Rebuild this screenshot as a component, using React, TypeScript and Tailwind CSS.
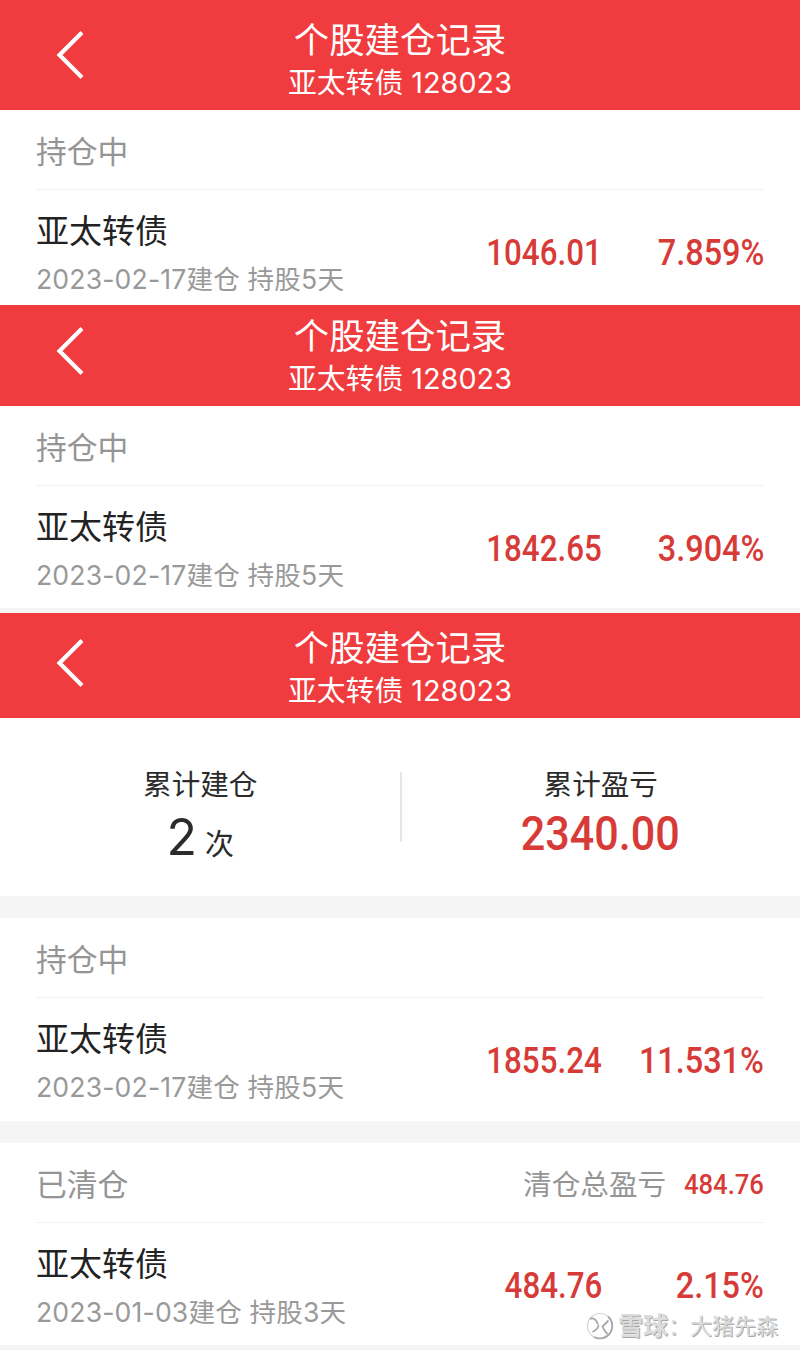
import React from "react";
import clsx from "clsx";

type Position = {
  name: string;
  detail: string;
  profit: string;
  percent: string;
};

interface HeaderProps {
  className: string;
}

const Header: React.FunctionComponent<HeaderProps> = ({className}) => {
  return (
    <header
      className={clsx("flex flex-none items-end justify-between bg-[#f03c3e] px-14 text-white", className)}
    >
      <svg className="mb-[30px] h-[50px] w-7" viewBox="0 0 28 50" fill="none">
        <path d="M26 2.5 3.5 25 26 47.5" stroke="currentColor" strokeWidth="4.2" />
      </svg>
      <div className="flex flex-col items-center whitespace-nowrap pb-[7px]">
        <h1 className="text-[35.4px] leading-[44px]">个股建仓记录</h1>
        <p className="text-[28.8px] leading-[40px]">亚太转债 128023</p>
      </div>
      <div className="w-7" />
    </header>
  );
};

interface AmountProps {
  children: React.ReactNode;
  className: string;
}

const Amount: React.FunctionComponent<AmountProps> = ({children, className}) => {
  return (
    <span
      className={clsx(
        "inline-block whitespace-nowrap font-['Roboto',sans-serif] font-medium text-[#d63b38]",
        className
      )}
    >
      {children}
    </span>
  );
};

interface PositionSectionProps {
  label: string;
  position: Position;
  total?: string;
  className: string;
}

const PositionSection: React.FunctionComponent<PositionSectionProps> = (props) => {
  const {label, position, total, className} = props;

  return (
    <section className={clsx("flex-none overflow-hidden bg-white px-9", className)}>
      <div className="flex h-20 items-center justify-between border-b border-[#f2f2f2] pt-1 text-[#959595]">
        <h2 className="text-[30.8px] leading-10">{label}</h2>
        {total && (
          <div className="flex items-center gap-[9px]">
            <span className="text-[28.6px] leading-10">清仓总盈亏</span>
            <Amount className="origin-right scale-x-[0.9] text-[28.5px] leading-10">{total}</Amount>
          </div>
        )}
      </div>
      <div className="flex h-[122px] items-center pt-1">
        <div className="flex-1 whitespace-nowrap pt-1">
          <h3 className="text-[33px] leading-[48px] text-[#222]">{position.name}</h3>
          <p className="text-[26.6px] leading-[48px] tracking-[0.15px] text-[#999]">{position.detail}</p>
        </div>
        <Amount className="origin-right scale-x-[0.87] text-[36px] leading-10">{position.profit}</Amount>
        <div className="w-[162px] text-right">
          <Amount className="origin-right scale-x-[0.9] text-[36px] leading-10">{position.percent}</Amount>
        </div>
      </div>
    </section>
  );
};

const Summary = () => {
  return (
    <section className="flex h-[178px] flex-none items-center bg-white text-[#2b2b2b]">
      <div className="flex h-full flex-1 flex-col items-center pl-px pt-[47px]">
        <span className="text-[28.6px] leading-10">累计建仓</span>
        <div className="flex h-16 items-baseline gap-2 leading-[64px]">
          <span className="text-[50px]">2</span>
          <span className="text-[29px]">次</span>
        </div>
      </div>
      <div className="h-[70px] w-0.5 bg-[#e6e6e6]" />
      <div className="flex h-full flex-1 flex-col items-center pt-[47px]">
        <span className="text-[28.6px] leading-10">累计盈亏</span>
        <Amount className="origin-center scale-x-[0.88] text-[49px] leading-[58px]">2340.00</Amount>
      </div>
    </section>
  );
};

const Watermark = () => {
  return (
    <div className="absolute bottom-1 right-[22px] flex items-center whitespace-nowrap text-[22px] leading-10 text-[#dcdcdc] [text-shadow:1px_1px_0_#a8a8a8]">
      <svg className="mr-1 h-7 w-7" viewBox="0 0 28 28" fill="none" stroke="#a8a8a8">
        <circle cx="14" cy="14" r="12.5" stroke="#d4d4d4" strokeWidth="1.2" />
        <path d="M22 4.500A12.500 12.500 0 0 1 8 25" strokeWidth="1.800" />
        <path d="M4 7c3.500-2 7 1.500 8 5.500M12.500 13c0 3-3 5.500-6 7" strokeWidth="1.8" />
        <path d="M22.500 8.500 16.500 14.500c1 3 3 5.500 5 7.500" strokeWidth="1.800" />
      </svg>
      <span className="text-[25px] font-bold">雪球</span>
      <span>：</span>
      <span>大猪先森</span>
    </div>
  );
};

const DETAIL = "2023-02-17建仓 持股5天";

const App = () => {
  return (
    <div className="relative flex h-[1350px] w-[800px] flex-col overflow-hidden bg-[#f5f5f5] font-['Inter','Noto_Sans_CJK_SC',sans-serif]">
      <Header className="h-[110px]" />
      <PositionSection
        className="h-[195px]"
        label="持仓中"
        position={{name: "亚太转债", detail: DETAIL, profit: "1046.01", percent: "7.859%"}}
      />
      <Header className="h-[101px]" />
      <PositionSection
        className="mb-[5px] h-[202px]"
        label="持仓中"
        position={{name: "亚太转债", detail: DETAIL, profit: "1842.65", percent: "3.904%"}}
      />
      <Header className="h-[105px]" />
      <Summary />
      <PositionSection
        className="mt-[22px] h-[203px]"
        label="持仓中"
        position={{name: "亚太转债", detail: DETAIL, profit: "1855.24", percent: "11.531%"}}
      />
      <PositionSection
        className="mt-[22px] h-[202px]"
        label="已清仓"
        total="484.76"
        position={{
          name: "亚太转债",
          detail: "2023-01-03建仓 持股3天",
          profit: "484.76",
          percent: "2.15%",
        }}
      />
      <Watermark />
    </div>
  );
};

export default App;
